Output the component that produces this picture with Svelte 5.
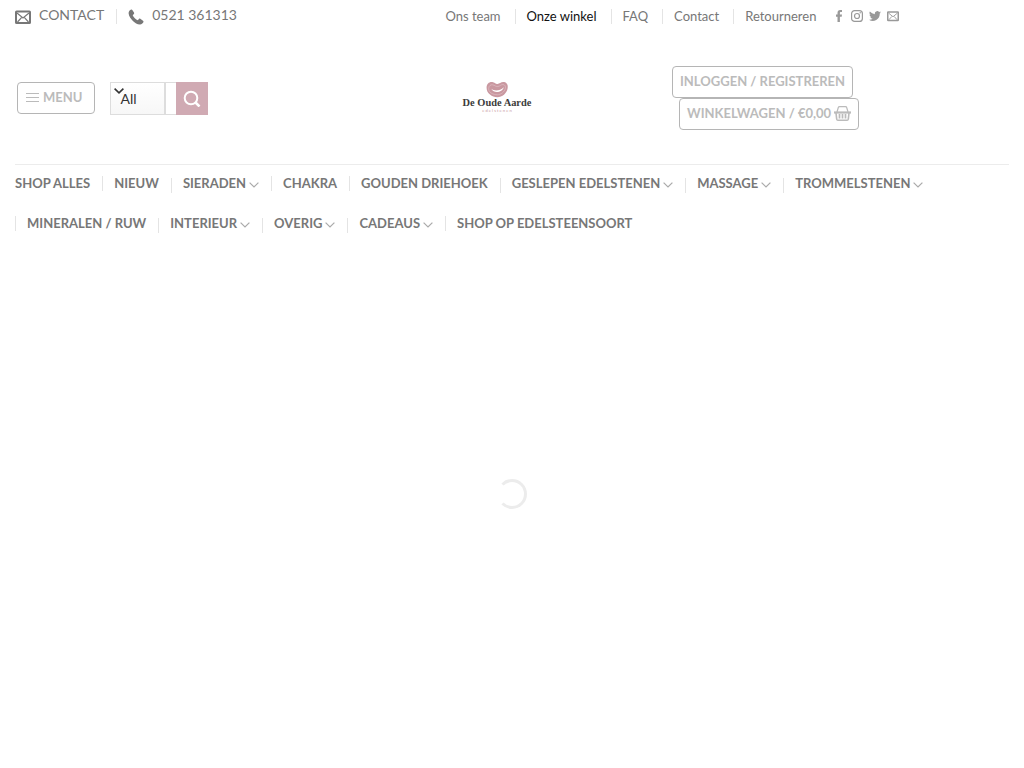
<script>
	const topLinks = [
		{ label: 'Ons team' },
		{ label: 'Onze winkel', active: true },
		{ label: 'FAQ' },
		{ label: 'Contact' },
		{ label: 'Retourneren' },
	];

	const mainLinks = [
		{ label: 'Shop alles' },
		{ label: 'Nieuw' },
		{ label: 'Sieraden', dropdown: true },
		{ label: 'Chakra' },
		{ label: 'Gouden driehoek' },
		{ label: 'Geslepen edelstenen', dropdown: true },
		{ label: 'Massage', dropdown: true },
		{ label: 'Trommelstenen', dropdown: true },
		{ label: 'Mineralen / ruw' },
		{ label: 'Interieur', dropdown: true },
		{ label: 'Overig', dropdown: true },
		{ label: 'Cadeaus', dropdown: true },
		{ label: 'Shop op edelsteensoort' },
	];

	let category = 'all';
	let query = '';
</script>

{#snippet envelope(size)}
	<svg width={size} height={size} viewBox="0 0 16 16" fill="none" stroke="currentColor" aria-hidden="true">
		<rect x="1" y="2.5" width="14" height="11.5" rx="0.6" stroke-width="2" />
		<path d="M2 4l6 5 6-5M2.5 13l4-4.4M13.5 13l-4-4.4" stroke-width="1.2" />
	</svg>
{/snippet}

<header>
	<div class="top-bar container">
		<ul class="nav contact">
			<li>
				<a href="#contact">{@render envelope(16)}<span>CONTACT</span></a>
			</li>
			<li>
				<a href="#phone">
					<svg width="16" height="16" viewBox="0 0 16 16" fill="currentColor" aria-hidden="true">
						<path d="M3.2.5C2 .9.5 2.4.6 4.3c.2 3 2.3 5.8 4.300 7.700 2 1.900 4.500 3.600 7.100 3.500 1.700-.1 3.200-1.500 3.500-2.700.1-.5-.1-.8-.5-1.100l-2.700-1.900c-.5-.3-.9-.3-1.300.1l-1.300 1.300c-1.700-.7-4.300-3.300-5-5l1.200-1.300c.4-.4.4-.8.100-1.300L4.300.9C4 .5 3.700.3 3.200.5z" />
					</svg>
					<span>0521 361313</span>
				</a>
			</li>
		</ul>
		<ul class="nav links">
			{#each topLinks as link}
				<li><a href="#top" class:active={link.active}>{link.label}</a></li>
			{/each}
		</ul>
		<div class="social">
			<a href="#facebook" aria-label="Facebook">
				<svg width="12" height="12" viewBox="0 0 12 12" fill="currentColor"><path d="M4.500 12V6.700H3V4.500h1.500V3.100C4.500 1.200 5.400 0 7.300 0H9v2.100H7.900c-.8 0-1 .4-1 1v1.400H9l-.3 2.200H6.900V12z" /></svg>
			</a>
			<a href="#instagram" aria-label="Instagram">
				<svg width="12" height="12" viewBox="0 0 12 12" fill="none" stroke="currentColor"><rect x=".6" y=".6" width="10.800" height="10.800" rx="3" stroke-width="1.200" /><circle cx="6" cy="6" r="2.500" stroke-width="1.200" /><circle cx="9.200" cy="2.800" r=".7" fill="currentColor" stroke="none" /></svg>
			</a>
			<a href="#twitter" aria-label="Twitter">
				<svg width="12" height="12" viewBox="0 0 24 24" fill="currentColor"><path d="M24 4.600a10 10 0 0 1-2.800.8 5 5 0 0 0 2.100-2.700c-1 .6-2 1-3.100 1.200a4.900 4.900 0 0 0-8.400 4.500A14 14 0 0 1 1.700 3.200a4.900 4.900 0 0 0 1.500 6.500 5 5 0 0 1-2.200-.6c0 2.400 1.600 4.400 3.900 4.900a5 5 0 0 1-2.200.1 4.900 4.900 0 0 0 4.600 3.400A10 10 0 0 1 0 19.500 14 14 0 0 0 21.500 7.100 10 10 0 0 0 24 4.600z" /></svg>
			</a>
			<a href="#mail" aria-label="E-mail">{@render envelope(12)}</a>
		</div>
	</div>

	<div class="main container">
		<div class="left">
			<button type="button" class="outline">
				<svg width="13" height="10" viewBox="0 0 13 10" stroke="currentColor" aria-hidden="true"><path d="M0 1.500h13M0 5.500h13M0 9.500h13" /></svg>
				MENU
			</button>
			<form class="search" on:submit|preventDefault>
				<div class="select">
					<svg width="10" height="6" viewBox="0 0 10 6" fill="none" stroke="#333" stroke-width="1.600" aria-hidden="true"><path d="M.6.6L5 4.800 9.400.6" /></svg>
					<select aria-label="Categorie" bind:value={category}>
						<option value="all">All</option>
					</select>
				</div>
				<input type="search" aria-label="Zoeken" bind:value={query} />
				<button type="submit" aria-label="Zoeken">
					<svg width="18" height="18" viewBox="0 0 18 18" fill="none" stroke="#fff" stroke-width="2"><circle cx="8" cy="9" r="6.300" /><path d="M12.500 13.500L16.500 17.500" stroke-width="2.500" /></svg>
				</button>
			</form>
		</div>

		<a class="logo" href="#home" aria-label="De Oude Aarde edelstenen">
			<svg width="72" height="34" viewBox="1.500 1 69 32.600">
				<path d="M26 7.500C26 3.500 28.800 1.500 31.500 2c2.400.4 3 2 5 1.800 2-.2 3.500-2.300 6.300-1.800 2.800.5 4 3 3.400 6C45.400 13 41 16.500 36.300 16.500c-5 0-10.300-3.500-10.300-9z" fill="#c998a0" />
				<path d="M28 8.500c0-3 2-4.300 4-3.800 2 .4 2.600 1.800 4.700 1.600 2.200-.2 3-2 5-1.900 2 .2 2.800 1.700 2.300 3.800-.7 3-4.200 6-7.700 6-3.800 0-8.300-2-8.300-5.700z" fill="none" stroke="#e2c2c8" stroke-width=".6" />
				<path d="M30.500 8.500c3 2.500 8.500 2 12-1.500-1 4.500-9 7-12 1.500z" fill="#fff" />
				<text class="name" x="36" y="25" text-anchor="middle">De Oude Aarde</text>
				<text class="tagline" x="36" y="31" text-anchor="middle">e d e l s t e n e n</text>
			</svg>
		</a>

		<div class="account">
			<a class="outline" href="#login">INLOGGEN / REGISTREREN</a>
			<a class="outline cart" href="#cart">
				WINKELWAGEN / €0,00
				<svg width="17" height="15" viewBox="0 0 17 15" fill="none" stroke="currentColor" aria-hidden="true">
					<path d="M3 6L4.300 1.500Q4.600.7 5.500.7h6q1 0 1.200.8L14 6" stroke-width="1.200" />
					<path d="M0 6.500h17" stroke-width="2.200" />
					<path d="M2 7l.7 6.200q.2 1 1.200 1h9.200q1 0 1.200-1l.7-6.200" stroke-width="1.600" />
					<path d="M5.500 8v4.500M8.500 8v4.500M11.500 8v4.500" stroke-width="1.700" />
				</svg>
			</a>
		</div>
	</div>

	<div class="container">
		<nav class="bottom">
			<ul class="nav">
				{#each mainLinks as link}
					<li class:dropdown={link.dropdown}>
						<a href="#shop">
							{link.label}
							{#if link.dropdown}
								<svg width="10" height="6" viewBox="0 0 10 6" fill="none" stroke="currentColor" stroke-width="1.200" aria-hidden="true"><path d="M.6.6L5 5 9.400.6" /></svg>
							{/if}
						</a>
					</li>
				{/each}
			</ul>
		</nav>
	</div>
</header>

<main>
	<div class="spinner" role="status" aria-label="Laden"></div>
</main>

<style>
:global(body) { background: #fff; }
header, main { font-family: Lato, "Liberation Sans", sans-serif; color: #777; }
.container { padding: 0 15px; }
a { color: inherit; text-decoration: none; }
svg { display: block; flex: none; }

.nav {
	display: flex;
	flex-wrap: wrap;
	column-gap: 12px;
	margin: 0;
	padding: 0;
	list-style: none;
}
.nav li { display: flex; align-items: center; }
.nav li + li::before {
	content: '';
	width: 1px;
	height: 15px;
	margin-right: 11px;
	background: #e4e4e4;
}
.nav a { display: flex; align-items: center; }

.top-bar { display: flex; align-items: center; height: 32px; }
.contact { width: 43%; font-size: 14px; }
.contact a { gap: 8px; line-height: 30px; }
.contact svg { margin-top: 2px; }
.contact span { padding-bottom: 2px; }
.links { column-gap: 14px; margin-left: 3px; font-size: 13px; }
.links .active { color: #111; }
.social { display: flex; gap: 6px; margin-left: 17px; color: #999; }

.main {
	display: grid;
	grid-template-columns: 446px 72px 1fr;
	align-items: center;
	height: 132px;
}
.left { display: flex; align-items: center; gap: 15px; padding-left: 2px; }
.outline {
	display: flex;
	align-items: center;
	gap: 3px;
	box-sizing: border-box;
	height: 32px;
	padding: 0 7px 2px;
	border: 1px solid #b5b5b5;
	border-radius: 4px;
	background: transparent;
	color: #bbb;
	font: 700 13px Lato, "Liberation Sans", sans-serif;
}
.left .outline { padding: 0 12px 2px 8px; gap: 4px; }

.search { display: flex; width: 98px; height: 33px; }
.select { position: relative; width: 55px; }
.select svg { position: absolute; top: 6px; left: 4px; pointer-events: none; }
select, input {
	box-sizing: border-box;
	width: 100%;
	height: 100%;
	border: 1px solid #ddd;
	border-radius: 0;
	background: #fff;
	color: #333;
	font: 14px Lato, "Liberation Sans", sans-serif;
}
select {
	padding: 0 9px;
	appearance: none;
	background: linear-gradient(#fff, #f7f7f7);
}
input { flex: 1; width: 11px; min-width: 0; padding: 0; border-right: 0; appearance: none; }
.search button {
	display: flex;
	align-items: center;
	justify-content: center;
	width: 32px;
	padding: 0;
	border: 0;
	background: #d0aab3;
}

.name { font: 700 10px "Liberation Serif", serif; fill: #3b3b3b; }
.tagline { font: 4px Lato, sans-serif; fill: #c998a0; }

.account {
	display: flex;
	flex-direction: column;
	align-items: flex-start;
	padding-left: 139px;
}
.cart { margin-left: 7px; }

.bottom { border-top: 1px solid #ececec; }
.bottom .nav { font-size: 13px; font-weight: 700; text-transform: uppercase; }
.bottom li { height: 40px; }
.bottom a { gap: 3px; padding-bottom: 5px; }
.bottom li + li::before { margin-bottom: 4px; }
.bottom li.dropdown::before { margin-bottom: 0; }
.bottom svg { margin-top: 4px; color: #aaa; }

main { display: flex; justify-content: center; padding: 234px 0; }
.spinner {
	box-sizing: border-box;
	width: 30px;
	height: 30px;
	border: 3px solid #ececec;
	border-left-color: transparent;
	border-radius: 50%;
}
</style>
